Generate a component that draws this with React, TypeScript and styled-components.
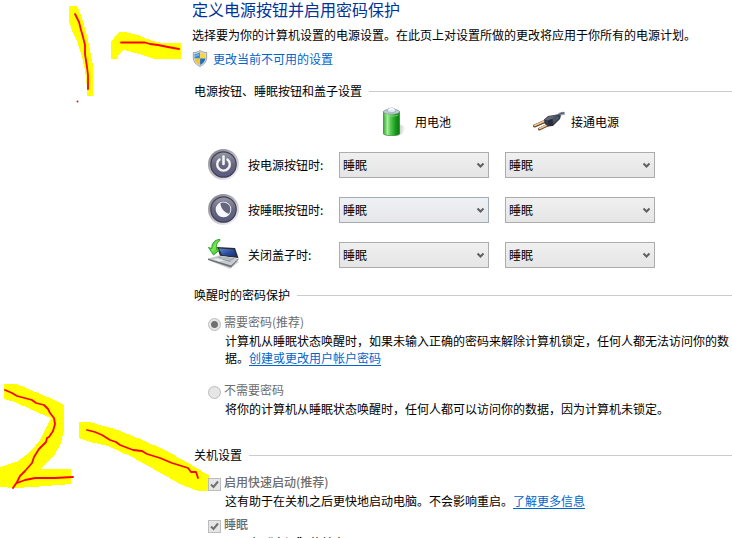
import React from 'react';
import styled, { createGlobalStyle, css } from 'styled-components';

const GlobalStyle = createGlobalStyle`
  * { box-sizing: border-box; }
  body {
    margin: 0;
    background: #fff;
    color: #000;
    font-family: "Noto Sans CJK SC", "Noto Sans", sans-serif;
    font-size: 12px;
    line-height: 17px;
  }
`;

const Page = styled.main`
  position: relative;
  height: 100vh;
  overflow: hidden;
  padding-left: 192px;
`;

const Annotations = styled.svg`
  position: absolute;
  left: 0;
  top: 0;
  pointer-events: none;
`;

const Content = styled.div`
  position: relative;
`;

const Title = styled.h1`
  margin: 0;
  font-size: 16px;
  font-weight: 400;
  line-height: 18px;
  color: #003399;
`;

const Intro = styled.p`
  margin: 8px 0 7px;
`;

const ShieldRow = styled.div`
  display: flex;
  align-items: center;
  gap: 5px;
`;

const Link = styled.a<{ $plain?: boolean }>`
  color: #0066cc;
  text-decoration: ${(p) => (p.$plain ? 'none' : 'underline')};
  text-underline-offset: 2px;
`;

const Section = styled.section<{ $gap: number }>`
  margin-top: ${(p) => p.$gap}px;
  padding-left: 2px;
`;

const SectionHeader = styled.div`
  display: flex;
  align-items: center;
  gap: 7px;

  &::after {
    content: '';
    flex: 1;
    height: 1px;
    margin-top: 2px;
    background: #cccccc;
  }
`;

const SectionTitle = styled.h2`
  margin: 0;
  font-size: 12px;
  font-weight: 400;
`;

const columns = css`
  display: grid;
  grid-template-columns: 32px 83px 150px 150px;
  column-gap: 8px;
  align-items: center;
  padding-left: 14px;
`;

const SourceRow = styled.div`
  ${columns}
  height: 30px;
  margin: 7px 0 6px;
`;

const Source = styled.div<{ $column: number; $indent: number; $gap: number }>`
  grid-column: ${(p) => p.$column};
  display: flex;
  align-items: center;
  gap: ${(p) => p.$gap}px;
  padding-left: ${(p) => p.$indent}px;
`;

const ActionRow = styled.div`
  ${columns}
  height: 45px;
`;

const SelectBox = styled.div<{ $last?: boolean }>`
  position: relative;
  width: 150px;
  margin-left: ${(p) => (p.$last ? 8 : 0)}px;
`;

const Select = styled.select<{ $hot?: boolean }>`
  display: block;
  appearance: none;
  width: 100%;
  height: 26px;
  padding: 0 20px 0 3px;
  border: 1px solid ${(p) => (p.$hot ? '#a3aab8' : '#acacac')};
  border-radius: 0;
  background: ${(p) =>
    p.$hot ? 'linear-gradient(#eff2f5, #e4e6e8)' : 'linear-gradient(#f0f0f0, #e5e5e5)'};
  color: #000;
  font: inherit;
`;

const Chevron = styled.svg`
  position: absolute;
  right: 4px;
  top: 10px;
  pointer-events: none;
`;

const Option = styled.div<{ $gap: number }>`
  margin-top: ${(p) => p.$gap}px;
  padding-left: 14px;
`;

const OptionLabel = styled.label<{ $strong?: boolean }>`
  display: flex;
  align-items: flex-start;
  gap: 3px;
  height: 15px;
  line-height: 15px;
  color: #6d6d6d;
  font-weight: ${(p) => (p.$strong ? 500 : 400)};
`;

const Description = styled.p`
  margin: 3px 0 0 17px;
`;

const Radio = styled.input`
  appearance: none;
  flex: none;
  width: 13px;
  height: 13px;
  margin: 4px 0 0;
  border: 1px solid #bcbcbc;
  border-radius: 50%;
  background: #e6e6e6;

  &:checked {
    background: radial-gradient(circle, #707070 3px, #e6e6e6 4px);
  }
`;

const CheckBox = styled.span`
  position: relative;
  flex: none;
  width: 13px;
  height: 13px;
  margin-top: 4px;
`;

const CheckInput = styled.input`
  appearance: none;
  display: block;
  width: 13px;
  height: 13px;
  margin: 0;
  border: 1px solid #bcbcbc;
  background: #e6e6e6;
`;

const CheckMark = styled.svg`
  position: absolute;
  inset: 0;
  pointer-events: none;
`;

const Icon = styled.svg`
  flex: none;
  display: block;
`;

function Marks() {
  return (
    <Annotations width="212" height="500" aria-hidden="true">
      <g fill="#ffff00" shapeRendering="crispEdges">
        <path d="M69 6H77L81 15L84 25L88 40L91 55L93 66V96H87V88L85 70L81 53L77 41L72 31L69 21Z" />
        <path d="M111 42L114 38L119 32H125L141 36L152 41L163 43H181V59H155L139 54L124 50L119 54L117 59H111Z" />
        <path d="M4 384H17L33 391L50 398L64 405V430L61 443L55 454L45 464L40 469H71V484L33 487L15 488L0 487V467L18 461L30 452L40 440L47 426L51 418L30 409L15 402L4 399Z" />
        <path d="M79 422H89L115 429L140 439L165 450L188 463L205 473L209 475V491H198L180 484L150 467L130 456L108 446L90 442L79 438Z" />
      </g>
      <g fill="none" stroke="#ff0000" strokeWidth="1.8" strokeLinecap="round" strokeLinejoin="round">
        <path d="M75 14L79 22L81 30L83 37L85 45L85 54L87 67L88 75V89" />
        <path d="M121 42.5H145L150 44L158 45L168 47L179 49" />
        <path d="M5 390L12 393L17 396L32 400L36 403L44 405L48 409L50 413L54 418L55 424L53 431L49 437L47 438L46 442L39 449L34 457L32 463L25 471L20 476L17 482L13 488M17 483L25 480L35 478H55L73 477" />
        <path d="M87 430L95 432L102 435L110 440L116 442L120 445L133 450L142 451L147 454L160 458L172 463L188 468L191 472L196 472L198 478" />
      </g>
      <circle cx="77.500" cy="101.500" r="1" fill="#a03030" />
    </Annotations>
  );
}

function ShieldIcon() {
  return (
    <Icon width="16" height="17" viewBox="0 0 16 17" aria-hidden="true">
      <path d="M8 .5C10 2 12.500 2.500 14.700 2.500V8C14.500 12 11.500 15 8 16.500C4.500 15 1.500 12 1.300 8V2.500C3.500 2.500 6 2 8 .5Z" fill="#d8dadb" stroke="#8b9093" strokeWidth=".8" />
      <path d="M7.900 2.300V8.500H2.600V3.900C4.500 3.800 6.500 3.300 7.900 2.300Z" fill="#2b86d8" />
      <path d="M8.100 2.300C9.500 3.300 11.500 3.800 13.400 3.900V8.500H8.100Z" fill="#fbd440" />
      <path d="M2.600 8.600H7.900V15C5 13.600 3 11.500 2.600 8.600Z" fill="#f7c520" />
      <path d="M13.400 8.600H8.100V15C11 13.600 13 11.500 13.400 8.600Z" fill="#1f6dbd" />
      <path d="M3.200 4.600C5 4.400 6.200 4 7.300 3.500V5.500L3.200 7Z" fill="#8cc8f5" opacity=".7" />
    </Icon>
  );
}

function BatteryIcon() {
  return (
    <Icon width="26" height="30" viewBox="0 0 26 30" aria-hidden="true">
      <defs>
        <linearGradient id="cell">
          <stop offset="0" stopColor="#39a832" />
          <stop offset=".25" stopColor="#a8eca0" />
          <stop offset=".45" stopColor="#55c94d" />
          <stop offset=".75" stopColor="#179b1c" />
          <stop offset="1" stopColor="#0b7813" />
        </linearGradient>
        <linearGradient id="cast">
          <stop offset="0" stopColor="#888" stopOpacity=".7" />
          <stop offset="1" stopColor="#aaa" stopOpacity="0" />
        </linearGradient>
      </defs>
      <path d="M17 18L24 21L20 28L14 30Z" fill="url(#cast)" />
      <path d="M1.500 5.500V28C4 30.300 15 30.300 17.500 28V5.500Z" fill="url(#cell)" stroke="#23862a" strokeWidth=".7" />
      <ellipse cx="9.500" cy="5.700" rx="8" ry="2.600" fill="#bccbd1" stroke="#8ca39b" strokeWidth=".7" />
      <path d="M5.500 5.500V3.500C6 1.600 13 1.600 13.500 3.500V5.500C12 7 7 7 5.500 5.500Z" fill="#dfe6f2" stroke="#91a0b6" strokeWidth=".6" />
      <ellipse cx="9.500" cy="3.200" rx="3" ry=".9" fill="#fff" />
      <path d="M2.500 9C6 10.500 13 10.500 16.500 9" fill="none" stroke="#8fe487" strokeWidth=".7" />
    </Icon>
  );
}

function PlugIcon() {
  return (
    <Icon width="32" height="20" viewBox="0 0 32 20" aria-hidden="true">
      <path d="M24 6C26 3 29 2 32 2.500" fill="none" stroke="#a4abb6" strokeWidth="3.200" />
      <path d="M24 5.500C26 3 29 2 31 2" fill="none" stroke="#555d6c" strokeWidth="1.500" />
      <path d="M1.500 15L13 10M6.500 18L15 14" stroke="#6d4b2e" strokeWidth="3" strokeLinecap="round" />
      <path d="M1.500 14.500L13 9.500M6.500 17.500L15 13.500" stroke="#efc89f" strokeWidth="1.500" strokeLinecap="round" />
      <path d="M11 8.500L15 5L24 3.500L28 4.500L27 8L20 15L15 15.500L11.500 12.500Z" fill="#343b4a" />
      <path d="M11.500 8.500L15.500 5.500L24 4L19 8L15 9.500Z" fill="#5d6576" />
      <path d="M15 9.500L19 8L20 14.500L15.500 15Z" fill="#282d39" />
      <path d="M19.500 7.500L25 4.500L26 7.500L20.500 12.500Z" fill="#4c5567" />
    </Icon>
  );
}

function RoundIcon({ id, children }: { id: string; children: React.ReactNode }) {
  return (
    <Icon width="32" height="32" viewBox="0 0 32 32" aria-hidden="true">
      <defs>
        <linearGradient id={`${id}-rim`} x1="0" y1="0" x2=".8" y2="1">
          <stop offset="0" stopColor="#77777b" />
          <stop offset=".5" stopColor="#b5b5ba" />
          <stop offset="1" stopColor="#f4f4f6" />
        </linearGradient>
        <linearGradient id={`${id}-face`} x1="0" y1="0" x2="0" y2="1">
          <stop offset="0" stopColor="#9a9aab" />
          <stop offset=".5" stopColor="#67677f" />
          <stop offset="1" stopColor="#5a5a80" />
        </linearGradient>
      </defs>
      <circle cx="15.500" cy="15.500" r="15.500" fill={`url(#${id}-rim)`} />
      <circle cx="15.500" cy="15.500" r="12.700" fill={`url(#${id}-face)`} stroke="#414158" strokeWidth="1.200" />
      {children}
    </Icon>
  );
}

function PowerIcon() {
  return (
    <RoundIcon id="power">
      <path d="M11.500 10.500A6.300 6.300 0 1 0 19.500 10.500" fill="none" stroke="#f4f4f8" strokeWidth="2.400" strokeLinecap="round" />
      <path d="M15.500 7.500V15" stroke="#f4f4f8" strokeWidth="2.600" strokeLinecap="round" />
    </RoundIcon>
  );
}

function SleepIcon() {
  return (
    <RoundIcon id="sleep">
      <circle cx="15.500" cy="15.500" r="7.800" fill="#f8f8fb" />
      <path d="M12.500 9C15.500 7.500 20 9 21.600 12C22.900 14.500 22.600 17.500 21 19.800C16.500 18.500 12.500 14.500 12.500 9Z" fill="#65657e" />
    </RoundIcon>
  );
}

function LidIcon() {
  return (
    <Icon width="32" height="32" viewBox="0 0 32 32" aria-hidden="true">
      <defs>
        <linearGradient id="screen" x1="0" y1="0" x2="1" y2="1">
          <stop offset="0" stopColor="#6489c8" />
          <stop offset=".5" stopColor="#2c4fa0" />
          <stop offset="1" stopColor="#182c62" />
        </linearGradient>
        <linearGradient id="arrow" x1="0" y1="0" x2="1" y2="1">
          <stop offset="0" stopColor="#1aa51c" />
          <stop offset=".5" stopColor="#7bea54" />
          <stop offset="1" stopColor="#22b51e" />
        </linearGradient>
      </defs>
      <path d="M2 22L22 30L31 23L28 21Z" fill="#aaa" opacity=".5" />
      <path d="M9 8L27 9L30.500 19L12 17Z" fill="#262a32" />
      <path d="M11 9.500L26 10.500L28.700 17.800L14 16Z" fill="url(#screen)" />
      <path d="M0 19.500L11 16.500L30.500 19.500L23 28.500Z" fill="#c9cdd2" />
      <path d="M0 19.500L23 26.500L30.500 19.500V20.500L23 28.500L0 21Z" fill="#6c7178" />
      <path d="M8 18.500L12 17.500L26.500 19.500L22 23Z" fill="#8e949b" />
      <path d="M9 18.500L24 21.500M12 17.800L25 20.200" stroke="#dfe3e7" strokeWidth=".6" />
      <path d="M5 20.500L10 19.500L16 21.500L11 22.500Z" fill="#e9ecef" />
      <path d="M12 .5C6.500 .5 3.500 4.500 3.800 9.500L.5 8.500L5.500 16L12 10.500L8.500 10.200C8 6 9 3 12 1.500Z" fill="url(#arrow)" stroke="#168a19" strokeWidth=".8" strokeLinejoin="round" />
    </Icon>
  );
}

function ActionSelect({ label, last, hot }: { label: string; last?: boolean; hot?: boolean }) {
  return (
    <SelectBox $last={last}>
      <Select aria-label={label} $hot={hot} defaultValue="sleep">
        <option value="sleep">睡眠</option>
      </Select>
      <Chevron width="9" height="7" viewBox="0 0 9 7" aria-hidden="true">
        <path d="M1.500 1.500L4.500 4.500L7.500 1.500" fill="none" stroke="#606060" strokeWidth="2" />
      </Chevron>
    </SelectBox>
  );
}

function Check({ label, gap }: { label: string; gap: number }) {
  return (
    <Option $gap={gap}>
      <OptionLabel $strong>
        <CheckBox>
          <CheckInput type="checkbox" defaultChecked disabled />
          <CheckMark width="13" height="13" viewBox="0 0 13 13" aria-hidden="true">
            <path d="M3 6.500L5.500 9L10 3.500" fill="none" stroke="#707070" strokeWidth="2" />
          </CheckMark>
        </CheckBox>
        {label}
      </OptionLabel>
    </Option>
  );
}

const actions = [
  { label: '按电源按钮时:', icon: <PowerIcon />, hot: false },
  { label: '按睡眠按钮时:', icon: <SleepIcon />, hot: true },
  { label: '关闭盖子时:', icon: <LidIcon />, hot: false },
];

export default function App() {
  return (
    <>
      <GlobalStyle />
      <Page>
        <Marks />
        <Content>
          <Title>定义电源按钮并启用密码保护</Title>
          <Intro>选择要为你的计算机设置的电源设置。在此页上对设置所做的更改将应用于你所有的电源计划。</Intro>
          <ShieldRow>
            <ShieldIcon />
            <Link href="#unlock" $plain>更改当前不可用的设置</Link>
          </ShieldRow>

          <Section $gap={15}>
            <SectionHeader>
              <SectionTitle>电源按钮、睡眠按钮和盖子设置</SectionTitle>
            </SectionHeader>
            <SourceRow>
              <Source $column={3} $indent={43} $gap={7}>
                <BatteryIcon />
                用电池
              </Source>
              <Source $column={4} $indent={36} $gap={6}>
                <PlugIcon />
                接通电源
              </Source>
            </SourceRow>
            {actions.map((a) => (
              <ActionRow key={a.label}>
                {a.icon}
                <span>{a.label}</span>
                <ActionSelect label={`${a.label} 用电池`} hot={a.hot} />
                <ActionSelect label={`${a.label} 接通电源`} last />
              </ActionRow>
            ))}
          </Section>

          <Section $gap={9}>
            <SectionHeader>
              <SectionTitle>唤醒时的密码保护</SectionTitle>
            </SectionHeader>
            <Option $gap={11}>
              <OptionLabel>
                <Radio type="radio" name="wake" defaultChecked disabled />
                需要密码(推荐)
              </OptionLabel>
              <Description>
                计算机从睡眠状态唤醒时，如果未输入正确的密码来解除计算机锁定，任何人都无法访问你的数据。
                <Link href="#password">创建或更改用户帐户密码</Link>
              </Description>
            </Option>
            <Option $gap={16}>
              <OptionLabel>
                <Radio type="radio" name="wake" disabled />
                不需要密码
              </OptionLabel>
              <Description>将你的计算机从睡眠状态唤醒时，任何人都可以访问你的数据，因为计算机未锁定。</Description>
            </Option>
          </Section>

          <Section $gap={29}>
            <SectionHeader>
              <SectionTitle>关机设置</SectionTitle>
            </SectionHeader>
            <Check label="启用快速启动(推荐)" gap={11} />
            <Option $gap={0}>
              <Description>
                这有助于在关机之后更快地启动电脑。不会影响重启。
                <Link href="#more">了解更多信息</Link>
              </Description>
            </Option>
            <Check label="睡眠" gap={7} />
            <Option $gap={0}>
              <Description>显示在“电源”菜单中。</Description>
            </Option>
          </Section>
        </Content>
      </Page>
    </>
  );
}
